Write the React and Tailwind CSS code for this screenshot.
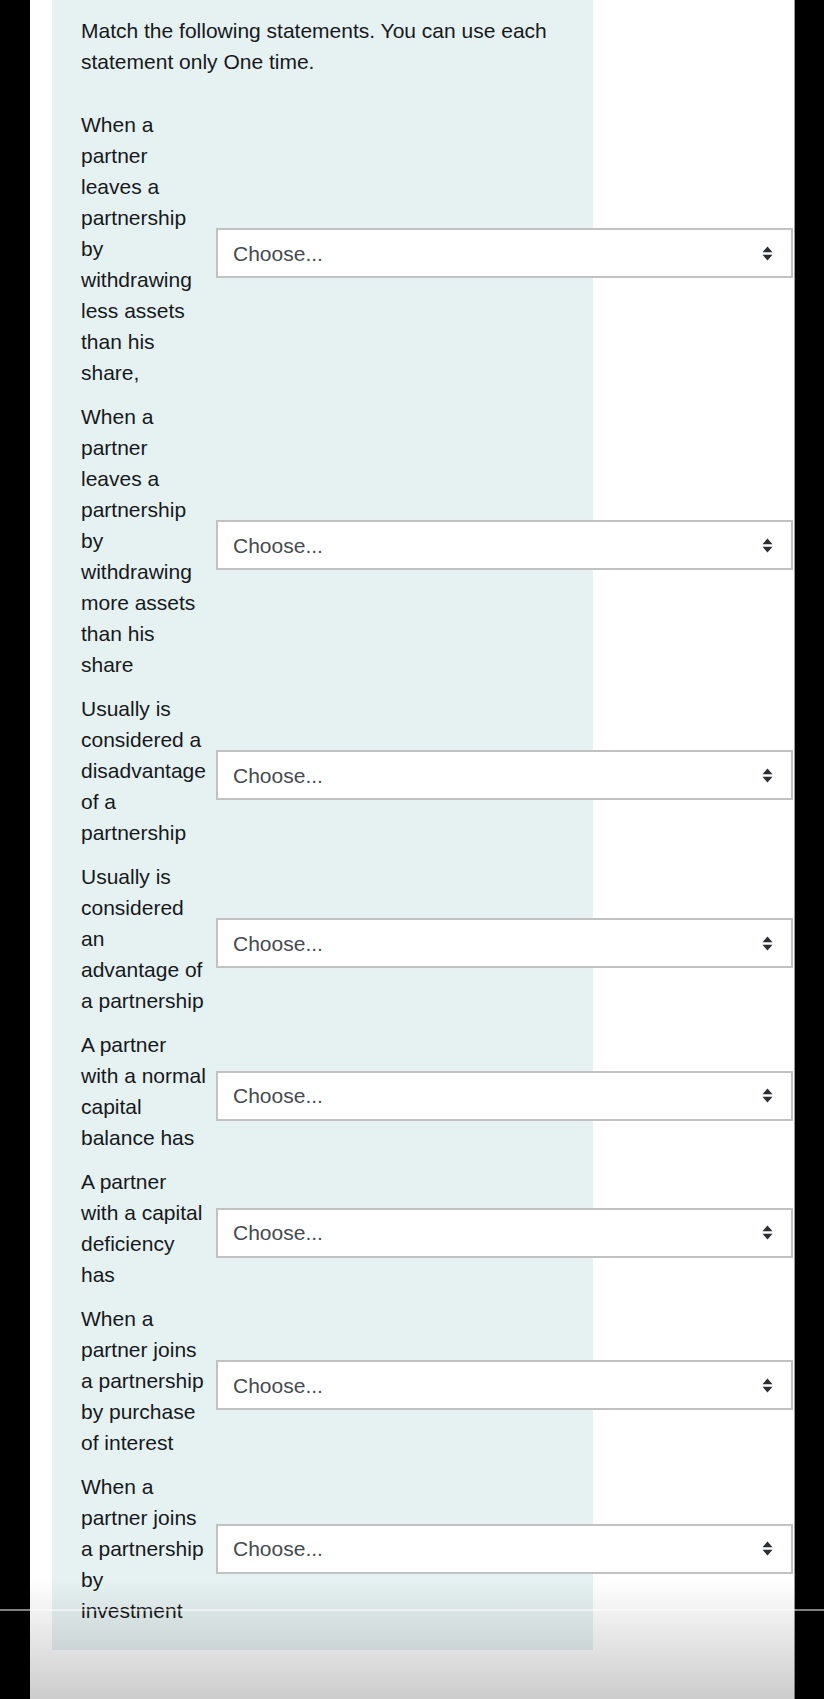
import React from 'react'

const statements = [
  'When a partner leaves a partnership by withdrawing less assets than his share,',
  'When a partner leaves a partnership by withdrawing more assets than his share',
  'Usually is considered a disadvantage of a partnership',
  'Usually is considered an advantage of a partnership',
  'A partner with a normal capital balance has',
  'A partner with a capital deficiency has',
  'When a partner joins a partnership by purchase of interest',
  'When a partner joins a partnership by investment',
]

const Arrows = () => (
  <svg width="11" height="17" viewBox="0 0 11 17" className="shrink-0">
    <path d="M5.5 1.5 L10.5 7.2 H0.5 Z" fill="#2b2f33" />
    <path d="M5.5 15.5 L10.5 9.8 H0.5 Z" fill="#2b2f33" />
  </svg>
)

const App = () => {
  return (
    <div className="relative h-[1699px] w-[824px] overflow-hidden bg-black font-['Liberation_Sans',Arial,sans-serif] text-[21px] leading-[31px] text-[#16191c]">
      <div className="ml-[30px] h-full w-[765px] border-r border-[#9a9a9a] bg-white">
        {/* question box */}
        <div className="ml-[22px] w-[541px] bg-[#e6f1f2] pl-[29px] pt-[15px] pb-[24px]">
          <p className="mb-[32px] w-[500px]">
            Match the following statements. You can use each statement only One time.
          </p>

          <div className="flex flex-col gap-[13px]">
            {statements.map((s, i) => (
              <div key={i} className="flex items-center">
                <div className="w-[126px] shrink-0">{s}</div>
                <div
                  className={
                    (i === statements.length - 1 ? 'mt-0 ' : 'mt-[9px] ') +
                    'ml-[9px] flex h-[50px] w-[577px] shrink-0 items-center justify-between border-2 border-[#c2c2c2] bg-white pl-[15px] pr-[18px] text-[#454b50]'
                  }
                >
                  <span>Choose...</span>
                  <Arrows />
                </div>
              </div>
            ))}
          </div>
        </div>
      </div>

      {/* video overlay at the bottom */}
      <div className="pointer-events-none absolute bottom-0 left-[30px] h-[120px] w-[765px] bg-gradient-to-b from-transparent to-black/20" />
      <div className="pointer-events-none absolute left-0 top-[1609px] h-[2px] w-full bg-white/50" />
    </div>
  )
}

export default App
